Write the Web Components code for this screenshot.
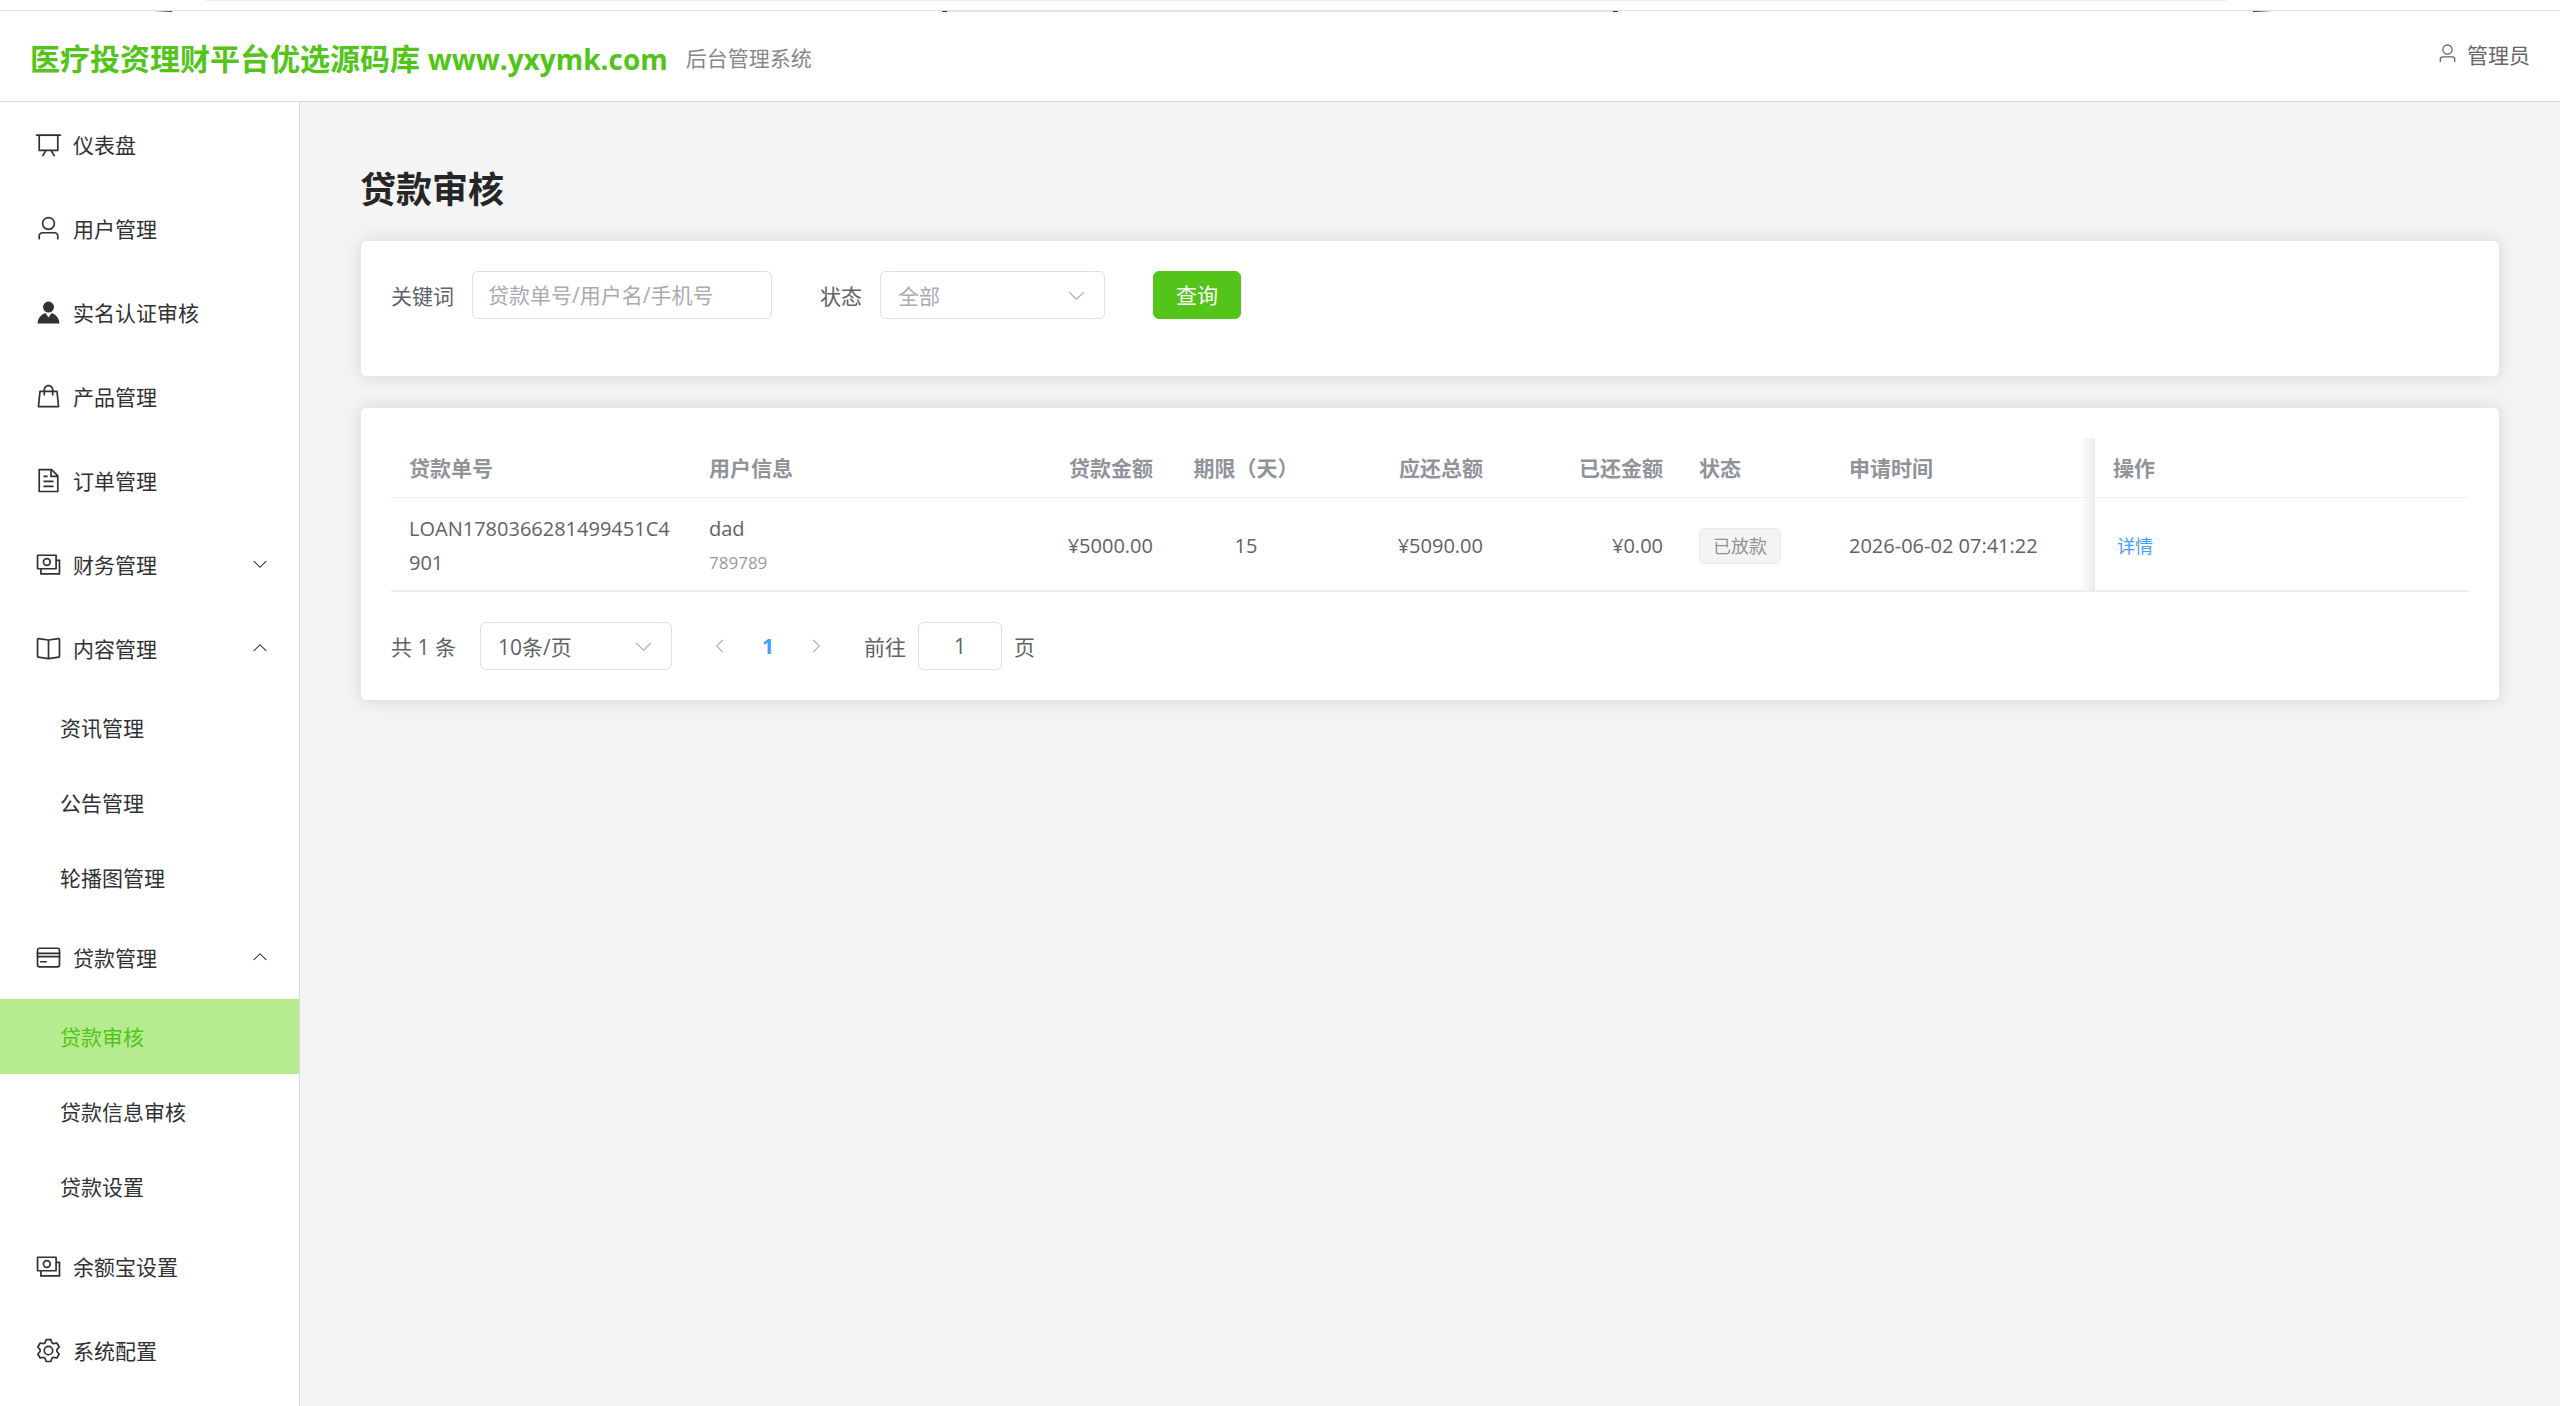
<!DOCTYPE html>
<html lang="zh-CN">
<head>
<meta charset="UTF-8">
<meta name="viewport" content="width=device-width, initial-scale=1.0">
<title>贷款审核 - 后台管理系统</title>
<style>
    body {
        margin: 0;
        font-family: 'Open Sans', 'Noto Sans CJK SC', sans-serif;
        font-size: 21px;
        color: #606266;
        background: #f4f4f4;
    }

    .site-url { font-size: 28px; }
</style>
</head>
<body>
<admin-layout>
    <admin-header slot="header" user="管理员">
        <span slot="title">医疗投资理财平台优选源码库 <span class="site-url">www.yxymk.com</span></span>
        <span slot="subtitle">后台管理系统</span>
    </admin-header>

    <side-menu slot="aside">
        <menu-item icon="board">仪表盘</menu-item>
        <menu-item icon="user">用户管理</menu-item>
        <menu-item icon="avatar">实名认证审核</menu-item>
        <menu-item icon="goods">产品管理</menu-item>
        <menu-item icon="document">订单管理</menu-item>
        <menu-item icon="money" arrow="down">财务管理</menu-item>
        <menu-item icon="reading" arrow="up">内容管理</menu-item>
        <menu-item sub>资讯管理</menu-item>
        <menu-item sub>公告管理</menu-item>
        <menu-item sub>轮播图管理</menu-item>
        <menu-item icon="card" arrow="up">贷款管理</menu-item>
        <menu-item sub active>贷款审核</menu-item>
        <menu-item sub>贷款信息审核</menu-item>
        <menu-item sub>贷款设置</menu-item>
        <menu-item icon="money">余额宝设置</menu-item>
        <menu-item icon="setting">系统配置</menu-item>
    </side-menu>

    <page-title>贷款审核</page-title>
    <panel-card><search-form></search-form></panel-card>
    <panel-card>
        <loan-table></loan-table>
        <page-pager></page-pager>
    </panel-card>
</admin-layout>

<script>
const ICONS = {
    board: '<path d="M32 128h960v64H32z"/><path d="M192 192v512h640V192zm-64-64h768v608a32 32 0 0 1-32 32H160a32 32 0 0 1-32-32z"/><path d="M322.176 960H248.32l144.64-250.56 55.424 32zm453.888 0h-73.856L576 741.44l55.424-32z"/>',
    user: '<path d="M512 512a192 192 0 1 0 0-384 192 192 0 0 0 0 384m0 64a256 256 0 1 1 0-512 256 256 0 0 1 0 512m320 320v-96a96 96 0 0 0-96-96H288a96 96 0 0 0-96 96v96a32 32 0 1 1-64 0v-96a160 160 0 0 1 160-160h448a160 160 0 0 1 160 160v96a32 32 0 1 1-64 0"/>',
    avatar: '<path d="M628.736 528.896A416 416 0 0 1 928 928H96a415.872 415.872 0 0 1 299.264-399.104L512 704zM720 304a208 208 0 1 1-416 0 208 208 0 0 1 416 0"/>',
    goods: '<path d="M320 288v-22.336C320 154.688 405.504 64 512 64s192 90.688 192 201.664v22.4h131.072a32 32 0 0 1 31.808 28.8l57.6 576a32 32 0 0 1-31.808 35.2H131.328a32 32 0 0 1-31.808-35.2l57.6-576a32 32 0 0 1 31.808-28.8H320zm64 0h256v-22.336C640 189.248 582.272 128 512 128s-128 61.248-128 137.664v22.4zm-64 64H217.92l-51.2 512h690.56l-51.264-512H704v96a32 32 0 1 1-64 0v-96H384v96a32 32 0 0 1-64 0z"/>',
    document: '<path d="M832 384H576V128H192v768h640zm-26.496-64L640 154.496V320zM160 64h480l256 256v608a32 32 0 0 1-32 32H160a32 32 0 0 1-32-32V96a32 32 0 0 1 32-32m160 448h384v64H320zm0-192h160v64H320zm0 384h384v64H320z"/>',
    money: '<g fill="none" stroke="currentColor" stroke-width="64"><rect x="96" y="160" width="704" height="512" rx="6"/><path d="M224 672v192h704V352H800"/><circle cx="448" cy="416" r="128"/></g>',
    reading: '<path d="m512 863.36 384-54.848v-638.72L525.568 222.72a96 96 0 0 1-27.136 0L128 169.792v638.72zM137.024 106.432l370.432 52.928a32 32 0 0 0 9.088 0l370.432-52.928A64 64 0 0 1 960 169.792v638.72a64 64 0 0 1-54.976 63.36l-388.48 55.488a32 32 0 0 1-9.088 0l-388.48-55.488A64 64 0 0 1 64 808.512v-638.72a64 64 0 0 1 73.024-63.36"/><path d="M480 192h64v704h-64z"/>',
    card: '<rect x="96" y="160" width="832" height="704" rx="80" fill="none" stroke="currentColor" stroke-width="64"/><path d="M64 320h896v64H64zm0 128h896v64H64zm128 192h256v64H192z"/>',
    setting: '<path d="M600.704 64a32 32 0 0 1 30.464 22.208l35.2 109.376c14.784 7.232 28.928 15.36 42.432 24.512l112.384-24.192a32 32 0 0 1 34.432 15.36L944.32 364.8a32 32 0 0 1-4.032 37.504l-77.12 85.12a357 357 0 0 1 0 49.024l77.12 85.248a32 32 0 0 1 4.032 37.504l-88.704 153.6a32 32 0 0 1-34.432 15.296L708.8 803.904c-13.44 9.088-27.648 17.28-42.368 24.512l-35.264 109.376A32 32 0 0 1 600.704 960H423.296a32 32 0 0 1-30.464-22.208L357.696 828.48a352 352 0 0 1-42.56-24.64l-112.32 24.256a32 32 0 0 1-34.432-15.36L79.68 659.2a32 32 0 0 1 4.032-37.504l77.12-85.248a357 357 0 0 1 0-48.896l-77.12-85.248A32 32 0 0 1 79.68 364.8l88.704-153.6a32 32 0 0 1 34.432-15.296l112.32 24.256c13.568-9.152 27.776-17.408 42.56-24.64l35.2-109.312A32 32 0 0 1 423.232 64H600.64zm-23.424 64H446.72l-36.352 113.088-24.512 11.968a294 294 0 0 0-34.816 20.096l-22.656 15.36-116.224-25.088-65.28 113.152 79.68 88.192-1.92 27.136a293 293 0 0 0 0 40.192l1.92 27.136-79.808 88.192 65.344 113.152 116.224-25.024 22.656 15.296a294 294 0 0 0 34.816 20.096l24.512 11.968L446.72 896h130.688l36.48-113.152 24.448-11.904a288 288 0 0 0 34.752-20.096l22.592-15.296 116.288 25.024 65.28-113.152-79.744-88.192 1.92-27.136a293 293 0 0 0 0-40.256l-1.92-27.136 79.808-88.128-65.344-113.152-116.288 24.96-22.592-15.232a288 288 0 0 0-34.752-20.096l-24.448-11.904L577.344 128zM512 320a192 192 0 1 1 0 384 192 192 0 0 1 0-384m0 64a128 128 0 1 0 0 256 128 128 0 0 0 0-256"/>',
    down: '<path d="M831.872 340.864 512 652.672 192.128 340.864a30.59 30.59 0 0 0-42.752 0 29.12 29.12 0 0 0 0 41.6L489.664 714.24a32 32 0 0 0 44.672 0l340.288-331.712a29.12 29.12 0 0 0 0-41.728 30.59 30.59 0 0 0-42.752 0z"/>',
    up: '<path transform="rotate(180 512 512)" d="M831.872 340.864 512 652.672 192.128 340.864a30.59 30.59 0 0 0-42.752 0 29.12 29.12 0 0 0 0 41.6L489.664 714.24a32 32 0 0 0 44.672 0l340.288-331.712a29.12 29.12 0 0 0 0-41.728 30.59 30.59 0 0 0-42.752 0z"/>',
    left: '<path transform="rotate(90 512 512)" d="M831.872 340.864 512 652.672 192.128 340.864a30.59 30.59 0 0 0-42.752 0 29.12 29.12 0 0 0 0 41.6L489.664 714.24a32 32 0 0 0 44.672 0l340.288-331.712a29.12 29.12 0 0 0 0-41.728 30.59 30.59 0 0 0-42.752 0z"/>',
    right: '<path transform="rotate(270 512 512)" d="M831.872 340.864 512 652.672 192.128 340.864a30.59 30.59 0 0 0-42.752 0 29.12 29.12 0 0 0 0 41.6L489.664 714.24a32 32 0 0 0 44.672 0l340.288-331.712a29.12 29.12 0 0 0 0-41.728 30.59 30.59 0 0 0-42.752 0z"/>'
};

// Shared by the form and the pager
const CONTROL_STYLES = `
    input, select, button {
        box-sizing: border-box;
        font: inherit;
        color: inherit;
        outline: none;
    }

    input, select {
        height: 48px;
        border: 1px solid #dcdfe6;
        border-radius: 6px;
        background: #fff;
        padding: 0 15px;
    }

    .select {
        display: grid;
        align-items: center;
    }

    .select select, .select ui-icon {
        grid-area: 1 / 1;
    }

    .select select {
        appearance: none;
        width: 100%;
        padding: 2px 17px 0;
    }

    .select ui-icon {
        justify-self: end;
        margin-right: 18px;
        color: #a8abb2;
        pointer-events: none;
    }
`;

class BaseElement extends HTMLElement {
    constructor() {
        super();
        this.attachShadow({ mode: 'open' });
    }

    connectedCallback() {
        this.shadowRoot.innerHTML = this.render();
    }
}

class UiIcon extends BaseElement {
    render() {
        return `
            <style>
                :host { display: block; flex: none; width: 21px; height: 21px; }
                svg { display: block; width: 100%; height: 100%; }
            </style>
            <svg viewBox="0 0 1024 1024" fill="currentColor" aria-hidden="true">${ICONS[this.getAttribute('name')] || ''}</svg>
        `;
    }
}

class AdminLayout extends BaseElement {
    render() {
        return `
            <style>
                :host {
                    display: flex;
                    flex-direction: column;
                    min-height: 100vh;
                }

                .body { display: flex; flex: 1; }

                main {
                    flex: 1;
                    min-width: 0;
                    display: flex;
                    flex-direction: column;
                    gap: 30px;
                    padding: 68px 60px 60px;
                }
            </style>
            <slot name="header"></slot>
            <div class="body">
                <slot name="aside"></slot>
                <main><slot></slot></main>
            </div>
        `;
    }
}

class AdminHeader extends BaseElement {
    render() {
        return `
            <style>
                :host { display: block; background: #fff; }

                .strip {
                    height: 9px;
                    margin: 0 13% 0 8%;
                    border-top: 1px solid #e9eef9;
                }

                .edge {
                    height: 1px;
                    border-top: 1px solid #e0e0e0;
                    background: linear-gradient(90deg,
                        #fff 6%, #444 6.7%, #fff 6.7%,
                        #fff 36.8%, #333 36.8%, #333 37%, #e4e4e4 37%,
                        #e4e4e4 63%, #333 63%, #333 63.2%, #fff 63.2%,
                        #fff 88%, #333 88%, #fff 88.8%);
                }

                header {
                    display: flex;
                    align-items: center;
                    height: 89px;
                    padding: 0 30px;
                    border-bottom: 1px solid #d9d9d9;
                }

                .title { font-size: 30px; font-weight: 700; color: #52c41a; }
                .subtitle { margin-left: 18px; color: #888; }

                .user {
                    display: flex;
                    align-items: center;
                    gap: 9px;
                    margin-left: auto;
                    padding-bottom: 6px;
                    color: #666;
                }
            </style>
            <div class="strip"></div>
            <div class="edge"></div>
            <header>
                <span class="title"><slot name="title"></slot></span>
                <span class="subtitle"><slot name="subtitle"></slot></span>
                <span class="user"><ui-icon name="user"></ui-icon>${this.getAttribute('user') || ''}</span>
            </header>
        `;
    }
}

class SideMenu extends BaseElement {
    render() {
        return `
            <style>
                :host {
                    display: block;
                    flex: none;
                    box-sizing: border-box;
                    width: 300px;
                    background: #fff;
                    border-right: 1px solid #dcdcdc;
                }
            </style>
            <nav><slot></slot></nav>
        `;
    }
}

class MenuItem extends BaseElement {
    render() {
        const icon = this.getAttribute('icon');
        const arrow = this.getAttribute('arrow');
        return `
            <style>
                :host { display: block; }

                a {
                    box-sizing: border-box;
                    display: flex;
                    align-items: center;
                    height: 84px;
                    padding: 0 30px 0 35px;
                    color: #303133;
                    text-decoration: none;
                }

                :host([sub]) a { height: 75px; padding: 0 30px 2px 60px; }
                :host([active]) a { color: #52c41a; background: #b7eb8f; }

                .icon { width: 27px; height: 27px; margin-right: 11px; }
                .arrow { width: 18px; height: 18px; margin-left: auto; }
            </style>
            <a href="#">
                ${icon ? `<ui-icon class="icon" name="${icon}"></ui-icon>` : ''}
                <slot></slot>
                ${arrow ? `<ui-icon class="arrow" name="${arrow}"></ui-icon>` : ''}
            </a>
        `;
    }
}

class PageTitle extends BaseElement {
    render() {
        return `
            <style>
                :host { display: block; }

                h1 {
                    margin: 0;
                    font-size: 36px;
                    line-height: 40px;
                    color: #262626;
                }
            </style>
            <h1><slot></slot></h1>
        `;
    }
}

class PanelCard extends BaseElement {
    render() {
        return `
            <style>
                :host {
                    display: flex;
                    flex-direction: column;
                    gap: 30px;
                    padding: 30px;
                    background: #fff;
                    border: 1px solid #e4e7ed;
                    border-radius: 6px;
                    box-shadow: 0 0 18px rgba(0, 0, 0, 0.12);
                }
            </style>
            <slot></slot>
        `;
    }
}

class SearchForm extends BaseElement {
    render() {
        return `
            <style>
                ${CONTROL_STYLES}
                :host { display: block; }
                form { display: flex; flex-wrap: wrap; gap: 48px; margin-bottom: 27px; }
                .field { display: flex; align-items: center; gap: 18px; }
                .field input { width: 300px; }
                .field input::placeholder { color: #a8abb2; opacity: 1; }
                .field .select { width: 225px; }
                .field select { color: #a8abb2; }

                button {
                    height: 48px;
                    padding: 0 22px 2px;
                    border: 1px solid #52c41a;
                    border-radius: 6px;
                    background: #52c41a;
                    color: #fff;
                }
            </style>
            <form>
                <div class="field">
                    <label for="keyword">关键词</label>
                    <input id="keyword" type="text" placeholder="贷款单号/用户名/手机号">
                </div>
                <div class="field">
                    <label for="status">状态</label>
                    <div class="select">
                        <select id="status"><option>全部</option></select>
                        <ui-icon name="down"></ui-icon>
                    </div>
                </div>
                <button type="button">查询</button>
            </form>
        `;
    }
}

class LoanTable extends BaseElement {
    get rows() {
        return [{
            no: 'LOAN1780366281499451C4901',
            user: 'dad',
            phone: '789789',
            amount: '¥5000.00',
            days: 15,
            total: '¥5090.00',
            repaid: '¥0.00',
            status: '已放款',
            time: '2026-06-02 07:41:22'
        }];
    }

    render() {
        return `
            <style>
                :host { display: block; }

                table {
                    width: 100%;
                    table-layout: fixed;
                    border-collapse: separate;
                    border-spacing: 0;
                    border-bottom: 1px solid #ebeef5;
                }

                th, td {
                    padding: 13px 18px 11px;
                    line-height: 34px;
                    text-align: left;
                    border-bottom: 1px solid #ebeef5;
                }

                th { color: #909399; font-weight: 700; line-height: 35px; white-space: nowrap; }
                td { padding: 14px 18px 10px; font-size: 20px; word-break: break-all; }
                .right { text-align: right; }
                .center { text-align: center; }
                .phone { font-size: 17px; color: #999; }

                .tag {
                    display: inline-block;
                    padding: 0 13px;
                    border: 1px solid #e9e9eb;
                    border-radius: 6px;
                    background: #f4f4f5;
                    color: #909399;
                    font-size: 18px;
                    vertical-align: middle;
                }

                .fixed { position: relative; }

                /* shadow cast to the left by the pinned column */
                .fixed::before {
                    content: '';
                    position: absolute;
                    top: 0;
                    bottom: 0;
                    right: 100%;
                    width: 15px;
                    background: linear-gradient(90deg, rgba(0, 0, 0, 0), rgba(0, 0, 0, 0.08));
                }

                a { padding: 0 4px; color: #409eff; font-size: 18px; text-decoration: none; }
            </style>
            <table>
                <colgroup>
                    <col width="300"><col width="300"><col width="180"><col width="150"><col width="180">
                    <col width="180"><col width="150"><col width="264"><col>
                </colgroup>
                <thead>
                    <tr>
                        <th>贷款单号</th>
                        <th>用户信息</th>
                        <th class="right">贷款金额</th>
                        <th class="center">期限（天）</th>
                        <th class="right">应还总额</th>
                        <th class="right">已还金额</th>
                        <th>状态</th>
                        <th>申请时间</th>
                        <th class="fixed">操作</th>
                    </tr>
                </thead>
                <tbody>
                    ${this.rows.map(row => `
                        <tr>
                            <td>${row.no}</td>
                            <td><div>${row.user}</div><div class="phone">${row.phone}</div></td>
                            <td class="right">${row.amount}</td>
                            <td class="center">${row.days}</td>
                            <td class="right">${row.total}</td>
                            <td class="right">${row.repaid}</td>
                            <td><span class="tag">${row.status}</span></td>
                            <td>${row.time}</td>
                            <td class="fixed"><a href="#">详情</a></td>
                        </tr>
                    `).join('')}
                </tbody>
            </table>
        `;
    }
}

class PagePager extends BaseElement {
    render() {
        return `
            <style>
                ${CONTROL_STYLES}
                :host { display: flex; align-items: center; gap: 24px; }
                .select { width: 192px; }
                .pages { display: flex; }

                .pages button {
                    display: flex;
                    align-items: center;
                    justify-content: center;
                    width: 48px;
                    height: 48px;
                    padding: 0;
                    border: 0;
                    background: none;
                    color: #a8abb2;
                }

                .pages .current { color: #409eff; font-weight: 700; }
                .pages ui-icon { width: 18px; height: 18px; }
                .jump { display: flex; align-items: center; gap: 12px; }
                .jump input { width: 84px; text-align: center; }
            </style>
            <span>共 1 条</span>
            <div class="select">
                <select aria-label="每页条数"><option>10条/页</option></select>
                <ui-icon name="down"></ui-icon>
            </div>
            <div class="pages">
                <button type="button" aria-label="上一页" disabled><ui-icon name="left"></ui-icon></button>
                <button type="button" class="current">1</button>
                <button type="button" aria-label="下一页" disabled><ui-icon name="right"></ui-icon></button>
            </div>
            <div class="jump">
                <label for="page">前往</label>
                <input id="page" type="text" value="1">
                <span>页</span>
            </div>
        `;
    }
}

customElements.define('ui-icon', UiIcon);
customElements.define('admin-layout', AdminLayout);
customElements.define('admin-header', AdminHeader);
customElements.define('side-menu', SideMenu);
customElements.define('menu-item', MenuItem);
customElements.define('page-title', PageTitle);
customElements.define('panel-card', PanelCard);
customElements.define('search-form', SearchForm);
customElements.define('loan-table', LoanTable);
customElements.define('page-pager', PagePager);
</script>
</body>
</html>
